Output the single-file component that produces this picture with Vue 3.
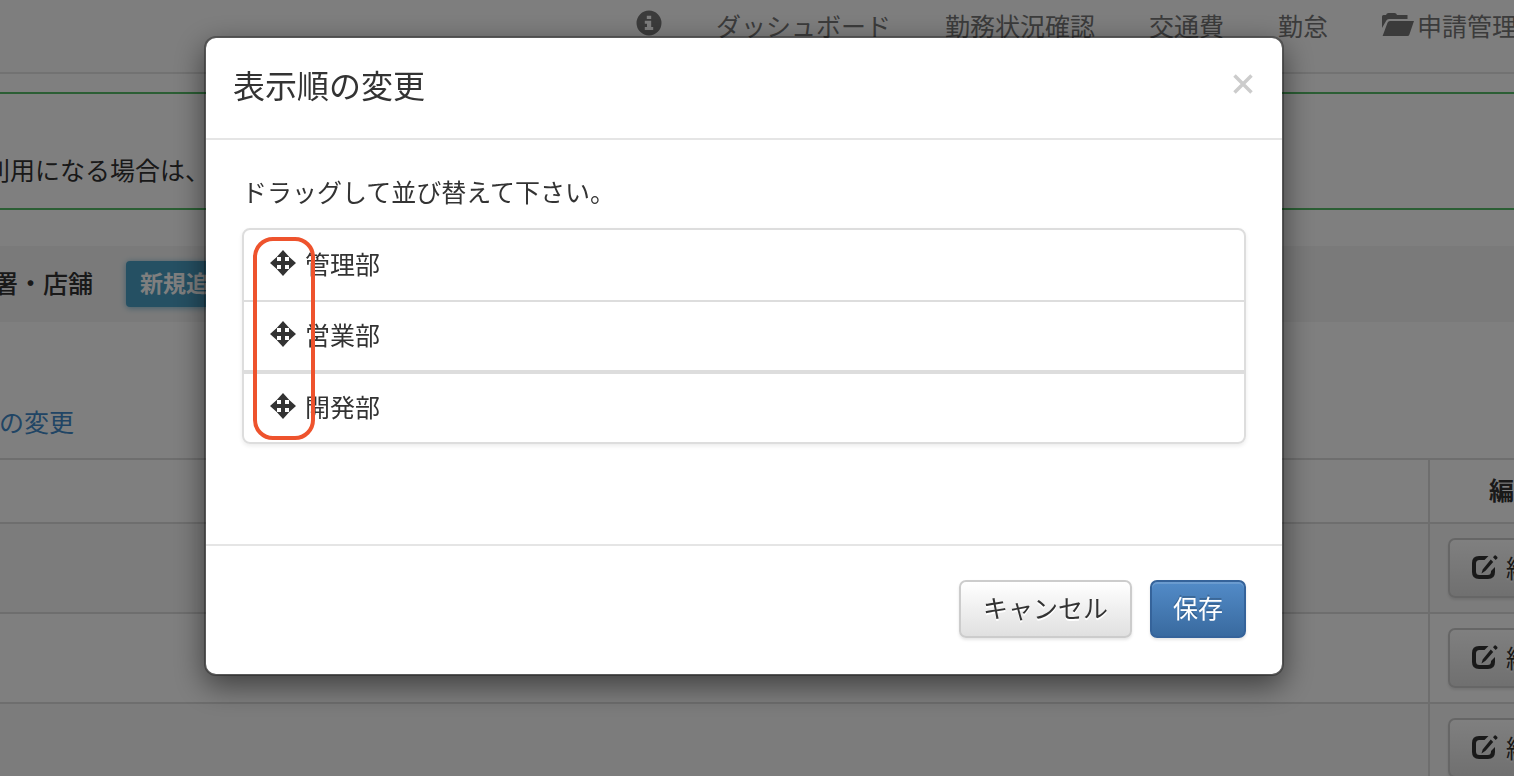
<template>
  <div class="viewport">
    <div class="page">
      <header class="navbar">
        <nav class="nav">
          <a href="#" class="nav-link" aria-label="info">
            <svg class="icon-info" viewBox="0 0 26 26">
              <path
                fill-rule="evenodd"
                d="M13 0.500a12.500 12.500 0 1 0 0 25a12.500 12.500 0 1 0 0-25zM10.800 5.800h4.400v3.200h-4.400zM8.800 10.800h6.400v6.200h2V20H8.800v-3h2.200v-3.200H8.800z"
              />
            </svg>
          </a>
          <a v-for="link in navLinks" :key="link" href="#" class="nav-link">{{ link }}</a>
          <a href="#" class="nav-link">
            <svg class="icon-folder" viewBox="0 0 32 24">
              <path d="M0 15V3.500Q0 2 1.500 2H4q.5-2 2.500-2h6q2 0 2.500 2h10.500v4H7q-2 0-2.800 1.800z" />
              <path d="M8 8h24l-4.600 13.500q-.5 1.500-2 1.500H.6L5.500 9.800Q6.200 8 8 8z" />
            </svg>
            <span>申請管理</span>
          </a>
        </nav>
      </header>

      <div class="alert">ご利用になる場合は、</div>

      <div class="section-bar">
        <h2 class="section-title">部署・店舗</h2>
        <button type="button" class="btn-add">新規追加</button>
      </div>

      <div class="order-link">
        <a href="#">表示順の変更</a>
      </div>

      <table class="table">
        <thead>
          <tr>
            <th></th>
            <th class="col-edit">編集</th>
          </tr>
        </thead>
        <tbody>
          <tr v-for="n in 3" :key="n">
            <td></td>
            <td class="col-edit">
              <button type="button" class="btn btn-edit">
                <svg class="icon-edit" viewBox="0 -1 26 25">
                  <path d="M16.500 0H7Q0 0 0 7v9q0 7 7 7h9q7 0 7-7V11l-4 4v.5q0 3.500-3.500 3.500h-8Q4 19 4 15.500v-8Q4 4 7.500 4h5z" />
                  <path d="M9.500 17.500l1.200-4L18.800 3.600l2.400 2.400L13.500 14.800z" />
                  <path d="M21 1.200l1.600-1.600q.6-.5 1.200 0l1.500 1.500q.5.600 0 1.200l-1.600 1.600z" />
                </svg>
                <span>編集</span>
              </button>
            </td>
          </tr>
        </tbody>
      </table>
    </div>

    <div class="backdrop">
      <div class="modal" role="dialog" aria-labelledby="modal-title">
        <div class="modal-header">
          <h1 id="modal-title" class="modal-title">表示順の変更</h1>
          <button type="button" class="close" aria-label="閉じる">
            <svg viewBox="0 0 20 20">
              <path d="M1.500 1.500l17 17M18.500 1.500l-17 17" />
            </svg>
          </button>
        </div>

        <div class="modal-body">
          <p class="guide">ドラッグして並び替えて下さい。</p>
          <div class="sort-area">
            <ul class="sort-list">
              <li v-for="item in departments" :key="item" class="sort-item">
                <svg class="icon-move" viewBox="0 0 26 26">
                  <path
                    d="M13 0l6.300 7H15v4h4V6.700L26 13l-7 6.300V15h-4v4h4.300L13 26l-6.300-7H11v-4H7v4.300L0 13l7-6.300V11h4V7H6.700z"
                  />
                </svg>
                <span>{{ item }}</span>
              </li>
            </ul>
            <div class="highlight"></div>
          </div>
        </div>

        <div class="modal-footer">
          <button type="button" class="btn btn-cancel">キャンセル</button>
          <button type="button" class="btn btn-primary">保存</button>
        </div>
      </div>
    </div>
  </div>
</template>

<script setup>
import { ref } from 'vue'

const navLinks = ['ダッシュボード', '勤務状況確認', '交通費', '勤怠']

const departments = ref(['管理部', '営業部', '開発部'])
</script>

<style>
body {
  margin: 0;
  background: #fff;
}
</style>

<style scoped>
.viewport {
  height: 100vh;
  overflow: hidden;
  font-family: "Noto Sans CJK JP", "Liberation Sans", sans-serif;
  font-size: 25px;
  line-height: 36px;
  color: #333;
}

button {
  font-family: inherit;
  font-size: inherit;
  cursor: pointer;
}

a {
  text-decoration: none;
}

/* page behind the dialog, scrolled past both edges */
.page {
  margin: 0 -84px 0 -80px;
}

.navbar {
  box-sizing: border-box;
  height: 74px;
  border-bottom: 2px solid #e4e4e4;
  background: #fdfdfd;
}

.nav {
  display: flex;
  justify-content: flex-end;
  gap: 54px;
  padding: 7px 81px 0 0;
}

.nav-link {
  display: flex;
  gap: 3px;
  color: #777;
  white-space: nowrap;
}

.nav-link svg {
  fill: #777;
}

.icon-info {
  width: 26px;
  height: 26px;
  margin-top: 3px;
}

.icon-folder {
  width: 32px;
  height: 24px;
  margin-top: 6px;
}

.alert {
  margin-top: 18px;
  padding: 57px 40px 21px;
  border-top: 2px solid #56bd68;
  border-bottom: 2px solid #56bd68;
}

.section-bar {
  display: flex;
  align-items: center;
  gap: 33px;
  height: 76px;
  margin-top: 36px;
  padding: 0 48px;
  box-sizing: border-box;
  background: #f5f5f5;
}

.section-title {
  margin: 0;
  padding-bottom: 4px;
  font-size: 25px;
  font-weight: 500;
}

.btn-add {
  height: 46px;
  padding: 0 14px 4px;
  border: none;
  border-radius: 4px;
  background: #4ba0c6;
  box-shadow: 0 1px 6px rgba(75, 160, 198, 0.7);
  color: #fff;
  font-size: 23px;
  font-weight: 700;
  line-height: 42px;
}

.order-link {
  padding: 81px 4px 19px;
}

.order-link a {
  color: #428bca;
}

.table {
  width: 100%;
  border-collapse: separate;
  border-spacing: 0;
}

.table th,
.table td {
  box-sizing: border-box;
  border-top: 2px solid #ddd;
}

.table th {
  height: 64px;
  padding: 0 0 4px;
  font-weight: 700;
}

.table td {
  height: 90px;
  padding: 14px 18px;
}

.table .col-edit {
  width: 170px;
  border-left: 2px solid #ddd;
}

.table tbody tr:nth-child(odd) {
  background: #f9f9f9;
}

.btn {
  box-sizing: border-box;
  height: 58px;
  padding: 0 22px 4px;
  border: 2px solid #ccc;
  border-radius: 7px;
  background: linear-gradient(#fff, #e0e0e0);
  box-shadow: 0 2px 3px rgba(0, 0, 0, 0.1);
  color: #333;
  text-shadow: 0 2px 0 #fff;
  line-height: 50px;
  white-space: nowrap;
}

.btn-edit {
  display: flex;
  align-items: center;
  gap: 8px;
  height: 60px;
  padding-bottom: 2px;
}

.icon-edit {
  width: 26px;
  height: 25px;
  fill: #333;
}

.backdrop {
  position: fixed;
  inset: 0;
  padding: 36px 230px 0 204px;
  background: rgba(0, 0, 0, 0.5);
}

.modal {
  border: 2px solid rgba(0, 0, 0, 0.3);
  border-radius: 12px;
  background: #fff;
  background-clip: padding-box;
  box-shadow: 0 10px 30px rgba(0, 0, 0, 0.5);
}

.modal-header {
  display: flex;
  justify-content: space-between;
  align-items: center;
  padding: 22px 28px 30px 27px;
  border-bottom: 2px solid #e5e5e5;
}

.modal-title {
  margin: 0;
  font-size: 32px;
  font-weight: 400;
  line-height: 48px;
}

.close {
  display: flex;
  padding: 0;
  border: none;
  background: none;
}

.close svg {
  width: 22px;
  height: 20px;
  fill: none;
  stroke: #ccc;
  stroke-width: 3.5;
}

.modal-body {
  padding: 33px 36px 100px;
}

.guide {
  margin: 0 0 19px;
}

.sort-area {
  position: relative;
}

.sort-list {
  margin: 0;
  padding: 0;
  border: 2px solid #ddd;
  border-radius: 8px;
  box-shadow: 0 2px 4px rgba(0, 0, 0, 0.08);
  list-style: none;
}

.sort-item {
  display: flex;
  align-items: center;
  gap: 9px;
  padding: 14px 26px 18px;
}

.sort-item:first-child {
  padding-top: 15px;
  padding-bottom: 19px;
  border-bottom: 2px solid #ddd;
}

.sort-item:nth-child(2) {
  border-bottom: 4px solid #ddd;
}

.icon-move {
  width: 26px;
  height: 26px;
  fill: #333;
}

.highlight {
  position: absolute;
  top: 9px;
  left: 11px;
  bottom: 4px;
  width: 62px;
  box-sizing: border-box;
  border: 4px solid #ee532d;
  border-radius: 20px;
  pointer-events: none;
}

.modal-footer {
  display: flex;
  justify-content: flex-end;
  gap: 18px;
  padding: 34px 36px 36px;
  border-top: 2px solid #e5e5e5;
}

.btn-primary {
  padding: 0 21px 4px;
  border-color: #35639a;
  background: linear-gradient(#528bc8, #396a9f);
  box-shadow: inset 0 2px 0 rgba(255, 255, 255, 0.15), 0 2px 3px rgba(0, 0, 0, 0.1);
  color: #fff;
  text-shadow: 0 -2px 0 rgba(0, 0, 0, 0.2);
}
</style>
